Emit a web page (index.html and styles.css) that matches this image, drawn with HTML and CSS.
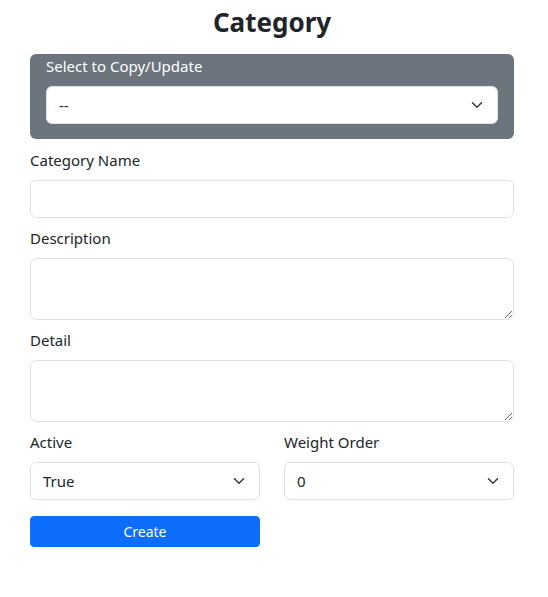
FILE: index.html
```html
<!DOCTYPE html>
<html>
<head>
<meta charset="utf-8">
<link rel="stylesheet" href="styles.css">
</head>
<body>
<div class="container">
  <h3 class="title">Category</h3>
  <div class="copy-box">
    <label class="copy-label">Select to Copy/Update</label>
    <div class="select">
      <span>--</span>
      <svg class="chev" viewBox="0 0 16 16" width="16" height="12"><path fill="none" stroke="#343a40" stroke-linecap="round" stroke-linejoin="round" stroke-width="2" d="m2 5 6 6 6-6"/></svg>
    </div>
  </div>
  <div class="group">
    <label class="label">Category Name</label>
    <input class="input" type="text">
  </div>
  <div class="group">
    <label class="label">Description</label>
    <textarea class="input area" rows="2"></textarea>
  </div>
  <div class="group">
    <label class="label">Detail</label>
    <textarea class="input area" rows="2"></textarea>
  </div>
  <div class="row">
    <div class="col">
      <label class="label">Active</label>
      <div class="select">
        <span>True</span>
        <svg class="chev" viewBox="0 0 16 16" width="16" height="12"><path fill="none" stroke="#343a40" stroke-linecap="round" stroke-linejoin="round" stroke-width="2" d="m2 5 6 6 6-6"/></svg>
      </div>
    </div>
    <div class="col">
      <label class="label">Weight Order</label>
      <div class="select">
        <span>0</span>
        <svg class="chev" viewBox="0 0 16 16" width="16" height="12"><path fill="none" stroke="#343a40" stroke-linecap="round" stroke-linejoin="round" stroke-width="2" d="m2 5 6 6 6-6"/></svg>
      </div>
    </div>
  </div>
  <div class="row">
    <div class="col">
      <button class="btn">Create</button>
    </div>
    <div class="col"></div>
  </div>
</div>
</body>
</html>
```
FILE: styles.css
```css
* { box-sizing: border-box; }
html, body { margin: 0; padding: 0; background: #fff; }
body {
  font-family: "Noto Sans", "Liberation Sans", sans-serif;
  font-size: 15px;
  line-height: 24px;
  color: #212529;
}
.container {
  width: 484px;
  margin: 0 30px;
  padding-top: 5px;
}
.title {
  margin: 0 0 15px;
  font-size: 26px;
  line-height: 34px;
  font-weight: 700;
  text-align: center;
}
.copy-box {
  background: #6c757d;
  border-radius: 6px;
  padding: 0 16px 15px;
  margin-bottom: 9px;
}
.copy-label {
  display: block;
  color: #fff;
  line-height: 24px;
  margin-bottom: 8px;
}
.select {
  display: flex;
  align-items: center;
  justify-content: space-between;
  height: 38px;
  padding: 6px 12px;
  background: #fff;
  border: 1px solid #dee2e6;
  border-radius: 6px;
}
.chev { display: block; }
.group { margin-bottom: 8px; }
.label {
  display: block;
  line-height: 24px;
  margin-bottom: 8px;
}
.input {
  display: block;
  width: 100%;
  height: 38px;
  padding: 6px 12px;
  font: inherit;
  border: 1px solid #dee2e6;
  border-radius: 6px;
  background: #fff;
  outline: none;
}
.area {
  height: 62px;
  resize: vertical;
}
.row {
  display: flex;
  gap: 24px;
  margin-bottom: 16px;
}
.col { flex: 1 1 0; min-width: 0; }
.btn {
  display: block;
  width: 100%;
  height: 31px;
  padding: 4px 8px;
  font-family: inherit;
  font-size: 14px;
  line-height: 21px;
  color: #fff;
  background: #0d6efd;
  border: 1px solid #0d6efd;
  border-radius: 4px;
}
```
